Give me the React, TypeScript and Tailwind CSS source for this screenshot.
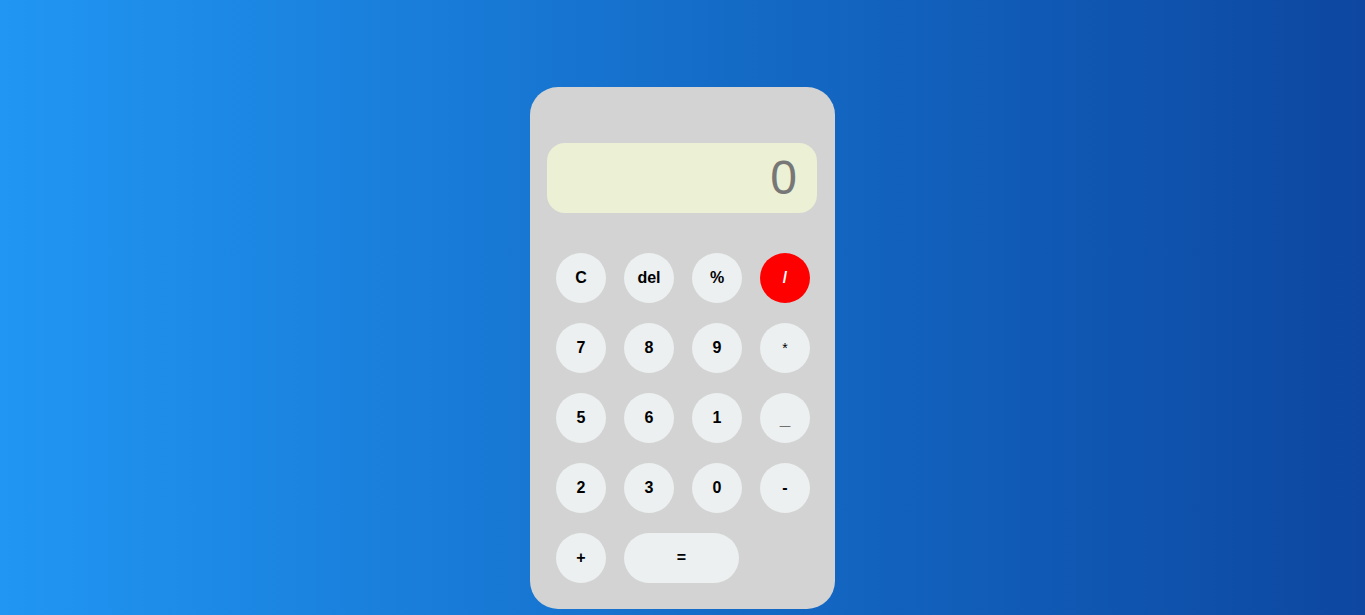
const rows: string[][] = [
  ["C", "del", "%", "/"],
  ["7", "8", "9", "*"],
  ["5", "6", "1", "_"],
  ["2", "3", "0", "-"],
];

function Key({ label, wide, red }: { label: string; wide?: boolean; red?: boolean }) {
  const size =
    label === "*" ? "font-normal text-[14px] " : label === "_" ? "font-bold text-[19px] pt-[2px] " : "font-bold text-[16px] ";
  return (
    <button
      className={
        "h-[50px] rounded-full flex items-center justify-center " +
        size +
        (wide ? "w-[115px] " : "w-[50px] ") +
        (red ? "bg-[#ff0000] text-white" : "bg-[#ecf0f1] text-black")
      }
    >
      {label}
    </button>
  );
}

export default function App() {
  return (
    <div
      className="w-full h-[615px] overflow-hidden bg-gradient-to-r from-[#2196f3] to-[#0d47a1] flex justify-center pt-[87px]"
      style={{ fontFamily: '"Liberation Sans", Arial, sans-serif' }}
    >
      <div className="w-[305px] h-[522px] bg-[#d3d3d3] rounded-[28px] pl-[17px] pr-[18px] pt-[56px]">
        <div className="h-[70px] rounded-[18px] bg-[#ecf0d4] flex items-center justify-end pr-[20px]">
          <span className="text-[48px] leading-none text-[#777777]">0</span>
        </div>
        <div className="mt-[40px] pl-[9px] flex flex-col gap-[20px]">
          {rows.map((r, i) => (
            <div key={i} className="flex gap-[18px]">
              {r.map((k) => (
                <Key key={k} label={k} red={k === "/"} />
              ))}
            </div>
          ))}
          <div className="flex gap-[18px]">
            <Key label="+" />
            <Key label="=" wide />
          </div>
        </div>
      </div>
    </div>
  );
}
